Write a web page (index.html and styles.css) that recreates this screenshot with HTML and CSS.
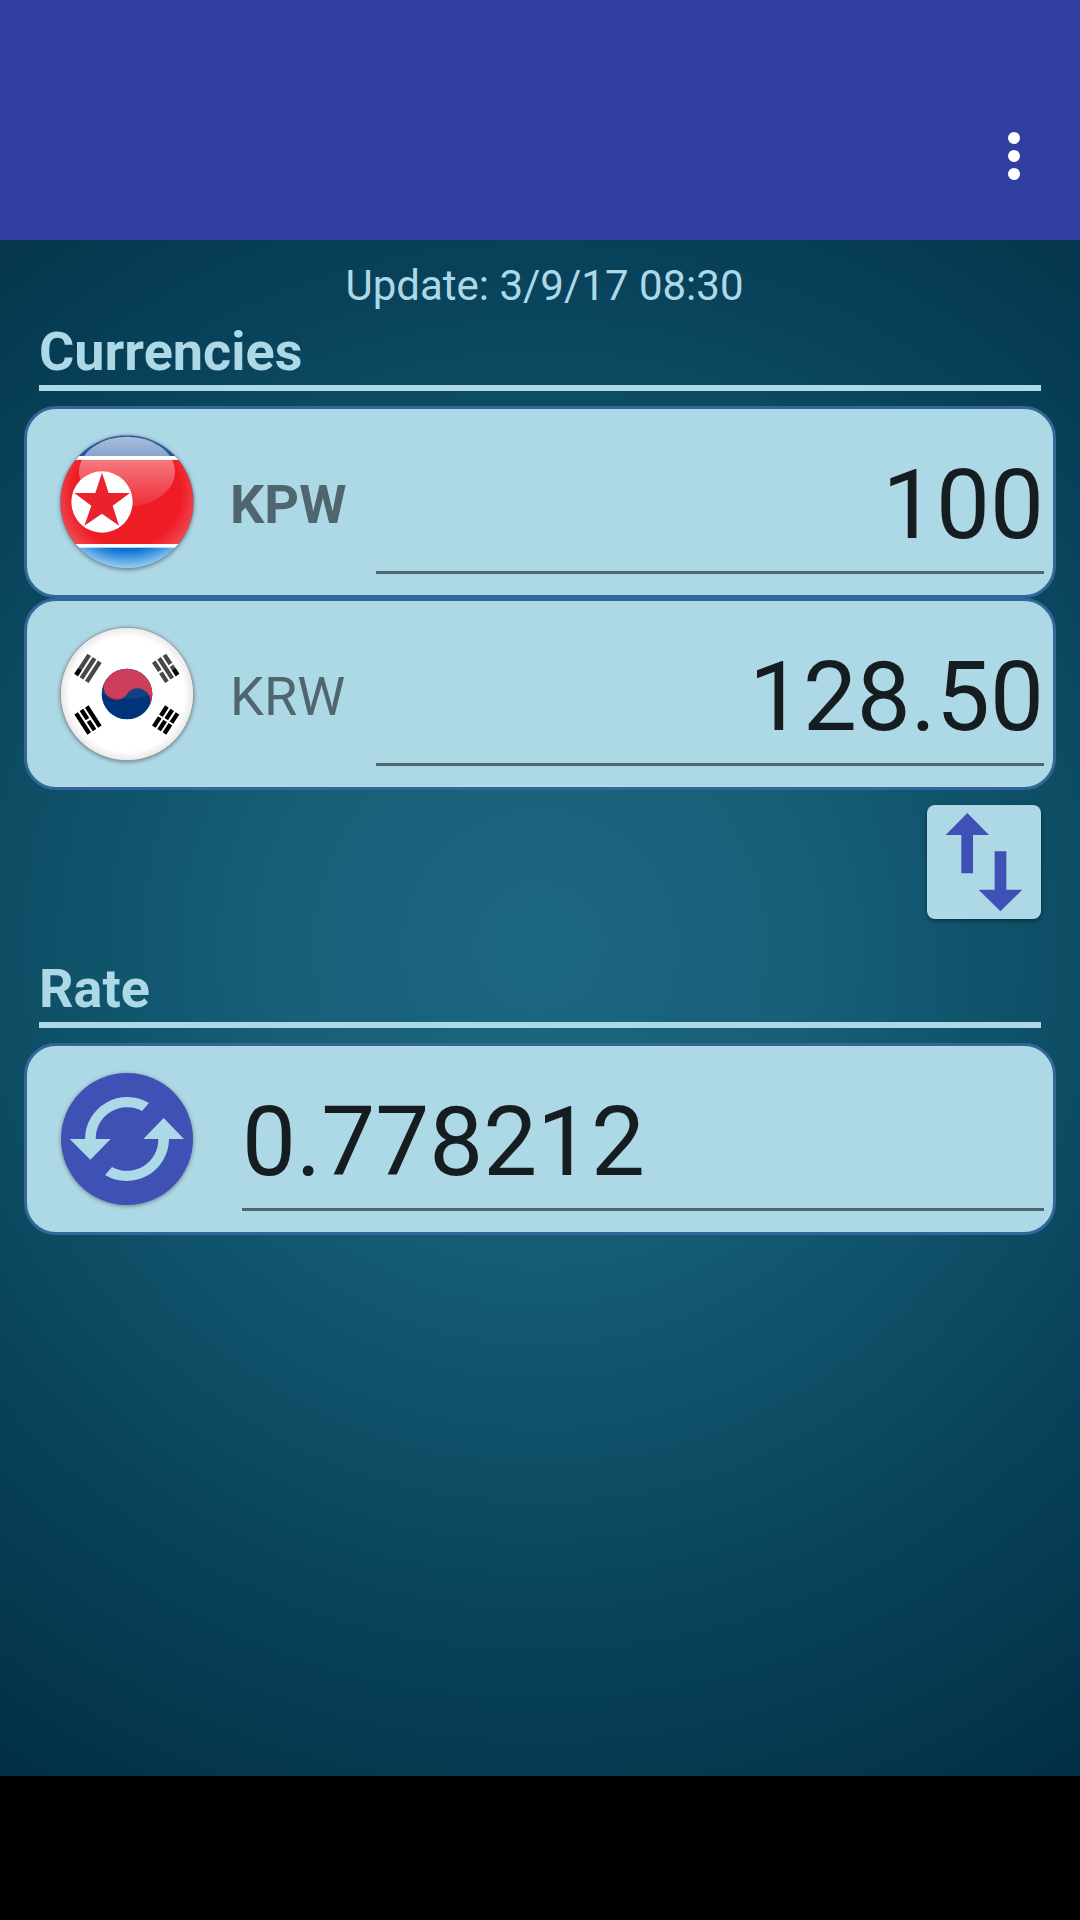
FILE: index.html
```html
<!DOCTYPE html>
<html lang="en">
<head>
<meta charset="utf-8">
<meta name="viewport" content="width=device-width, initial-scale=1">
<title>Currency converter</title>
<link rel="stylesheet" href="styles.css">
</head>
<body>
<header class="app-bar">
  <button class="menu-button" type="button" aria-label="More options">
    <svg class="menu-icon" viewBox="0 0 12 48" aria-hidden="true">
      <circle cx="6" cy="6" r="6"/><circle cx="6" cy="24" r="6"/><circle cx="6" cy="42" r="6"/>
    </svg>
  </button>
</header>

<main class="content">
  <p class="update">Update: 3/9/17 08:30</p>

  <section>
    <h2 class="section-title">Currencies</h2>
    <div class="card">
      <svg class="badge" viewBox="-201 -201 402 402" aria-hidden="true">
        <defs>
          <clipPath id="disc"><circle r="200"/></clipPath>
          <linearGradient id="gloss" x1="0" y1="0" x2="0" y2="1">
            <stop offset="0" stop-color="#fff" stop-opacity=".62"/>
            <stop offset=".5" stop-color="#fff" stop-opacity=".32"/>
            <stop offset="1" stop-color="#fff" stop-opacity=".08"/>
          </linearGradient>
          <radialGradient id="sea" gradientUnits="userSpaceOnUse" cx="0" cy="-60" r="262">
            <stop offset=".78" stop-color="#0873d3"/>
            <stop offset="1" stop-color="#a4d2f6"/>
          </radialGradient>
          <radialGradient id="rim" gradientUnits="userSpaceOnUse" cx="0" cy="-30" r="232">
            <stop offset=".7" stop-color="#fff" stop-opacity="0"/>
            <stop offset="1" stop-color="#fff" stop-opacity=".25"/>
          </radialGradient>
          <radialGradient id="pearl">
            <stop offset=".86" stop-color="#fff"/>
            <stop offset="1" stop-color="#e8e8e8"/>
          </radialGradient>
        </defs>
        <g clip-path="url(#disc)">
          <rect x="-200" y="-200" width="400" height="400" fill="#fff"/>
          <rect x="-200" y="-200" width="400" height="62" fill="#2359a3"/>
          <rect x="-200" y="-127" width="400" height="253" fill="#ee1c25"/>
          <rect x="-200" y="137" width="400" height="64" fill="url(#sea)"/>
          <rect x="-200" y="-127" width="400" height="253" fill="url(#rim)"/>
          <ellipse cy="-91" rx="144" ry="105" fill="url(#gloss)"/>
          <rect x="-200" y="-138" width="400" height="11" fill="#fff"/>
          <circle cx="-75" r="92" fill="#fff"/>
          <path d="M-75-88-55-27H9L-43 11-24 71-75 35-128 71-107 11-158-27H-95Z" fill="#e9222e"/>
        </g>
        <circle r="200" fill="none" stroke="#52708a" stroke-width="2"/>
      </svg>
      <label class="code code-active" for="amount-kpw">KPW</label>
      <input class="amount amount-end" id="amount-kpw" type="text" inputmode="decimal" value="100">
    </div>
    <div class="card">
      <svg class="badge" viewBox="-201 -201 402 402" aria-hidden="true">
        <circle r="200" fill="url(#pearl)" stroke="#777" stroke-width="2"/>
        <circle r="76" fill="#003478"/>
        <path transform="rotate(33.7)" d="M-76 0A76 76 0 0 1 76 0A38 38 0 0 0 0 0A38 38 0 0 1-76 0Z" fill="#c9304d"/>
        <ellipse cy="-91" rx="144" ry="105" fill="#fff" opacity=".07"/>
        <g stroke-width="13">
          <path transform="translate(-117 -77) rotate(-57)" d="M-36-19H36M-36 0H36M-36 19H36" stroke="#484848"/>
          <path transform="translate(116 -77) rotate(57)" d="M-36-19H-3M3-19H36M-36 0H36M-36 19H-3M3 19H36" stroke="#484848"/>
          <path transform="translate(-117 78) rotate(57)" d="M-36-19H36M-36 0H-3M3 0H36M-36 19H36" stroke="#000"/>
          <path transform="translate(116 78) rotate(-57)" d="M-36-19H-3M3-19H36M-36 0H-3M3 0H36M-36 19H-3M3 19H36" stroke="#000"/>
          <path transform="translate(-117 -77) rotate(-57)" d="M-36-19H-16" stroke="#000"/>
          <path transform="translate(116 -77) rotate(57)" d="M16-19H36" stroke="#000"/>
        </g>
      </svg>
      <label class="code" for="amount-krw">KRW</label>
      <input class="amount amount-end" id="amount-krw" type="text" inputmode="decimal" value="128.50">
    </div>
    <div class="actions">
      <button class="swap-button" type="button" aria-label="Swap currencies">
        <svg class="swap-icon" viewBox="0 0 342 342" aria-hidden="true">
          <path d="M121 24 186 90H138V205H103V90H56ZM203 139H238V254H286L220 319 155 254H203Z"/>
        </svg>
      </button>
    </div>
  </section>

  <section>
    <h2 class="section-title section-title-rate" id="rate-title">Rate</h2>
    <div class="card">
      <button class="badge refresh-button" type="button" aria-label="Refresh rate">
        <svg class="refresh-icon" viewBox="-198 -198 396 396" aria-hidden="true">
          <path d="M-126 1V0A127 127 0 0 1 66-108L45-84A94 94 0 0 0-94 0V1ZM126-1V0A127 127 0 0 1-66 108L-45 84A94 94 0 0 0 94 0V-1Z"/>
          <path d="M-172 0H-49L-110 62ZM171 0H49L110-63Z"/>
        </svg>
      </button>
      <input class="amount amount-rate" type="text" inputmode="decimal" value="0.778212" aria-labelledby="rate-title">
    </div>
  </section>
</main>

<footer class="nav-bar"></footer>
</body>
</html>
```

FILE: styles.css
```css
* {
  box-sizing: border-box;
}

body {
  display: flex;
  flex-direction: column;
  min-height: 100vh;
  margin: 0;
  background: #000;
  color: #add8e6;
  font-family: Roboto, "Liberation Sans", sans-serif;
}

button {
  display: flex;
  align-items: center;
  justify-content: center;
  margin: 0;
  padding: 0;
  border: 0;
  cursor: pointer;
}

.app-bar {
  display: flex;
  justify-content: flex-end;
  padding: 72px 6px 0 0;
  background: #303f9f;
}

.menu-button {
  width: 120px;
  height: 168px;
  background: none;
}

.menu-icon {
  width: 12px;
  height: 48px;
  fill: #fff;
}

.content {
  flex: 1;
  padding: 21px 24px 48px;
  background: radial-gradient(circle farthest-corner at 50% 46%,
    #1c6780 0%, #185f78 26%, #10546c 44%, #0c4b62 58%, #08425a 69%, #053b52 82%, #022e45 100%);
}

.update {
  margin: 0;
  padding-left: 9px;
  font-size: 42px;
  line-height: 50px;
  text-align: center;
}

.section-title {
  margin: 9px 15px 15px;
  padding-bottom: 1px;
  border-bottom: 6px solid #add8e6;
  font-size: 54px;
  font-weight: 700;
  line-height: 64px;
}

.section-title-rate {
  margin-top: 38px;
}

.card {
  display: flex;
  align-items: center;
  height: 192px;
  padding: 0 9px 0 33px;
  border: 3px solid #336699;
  border-radius: 32px;
  background: #add8e6;
}

.badge {
  flex: none;
  width: 134px;
  height: 134px;
  border-radius: 50%;
  filter: drop-shadow(0 1px 2px rgba(0, 0, 0, 0.4));
}

.code {
  flex: none;
  width: 182px;
  padding: 6px 0 0 36px;
  color: #50666e;
  font-size: 54px;
  line-height: 64px;
}

.code-active {
  font-weight: 700;
}

.amount {
  flex: 1;
  align-self: flex-end;
  min-width: 0;
  height: 125px;
  margin: 0 0 21px;
  padding: 0 0 10px;
  border: 0;
  border-bottom: 3px solid #4f676f;
  border-radius: 0;
  outline: 0;
  background: none;
  color: #161d20;
  font-family: inherit;
  font-size: 96px;
  line-height: 112px;
}

.amount-end {
  text-align: right;
}

.amount-rate {
  margin-left: 48px;
}

.actions {
  display: flex;
  justify-content: flex-end;
  padding: 15px 15px 0;
}

.swap-button {
  width: 114px;
  height: 114px;
  border-radius: 8px;
  background: #add8e6;
  box-shadow: 0 2px 5px rgba(0, 0, 0, 0.4);
}

.swap-icon {
  width: 114px;
  height: 114px;
  fill: #3f51b5;
}

.refresh-button {
  border: 1px solid transparent;
  background: #3f51b5 padding-box;
}

.refresh-icon {
  width: 132px;
  height: 132px;
  fill: #add8e6;
}

.nav-bar {
  height: 144px;
  background: #000;
}
```
